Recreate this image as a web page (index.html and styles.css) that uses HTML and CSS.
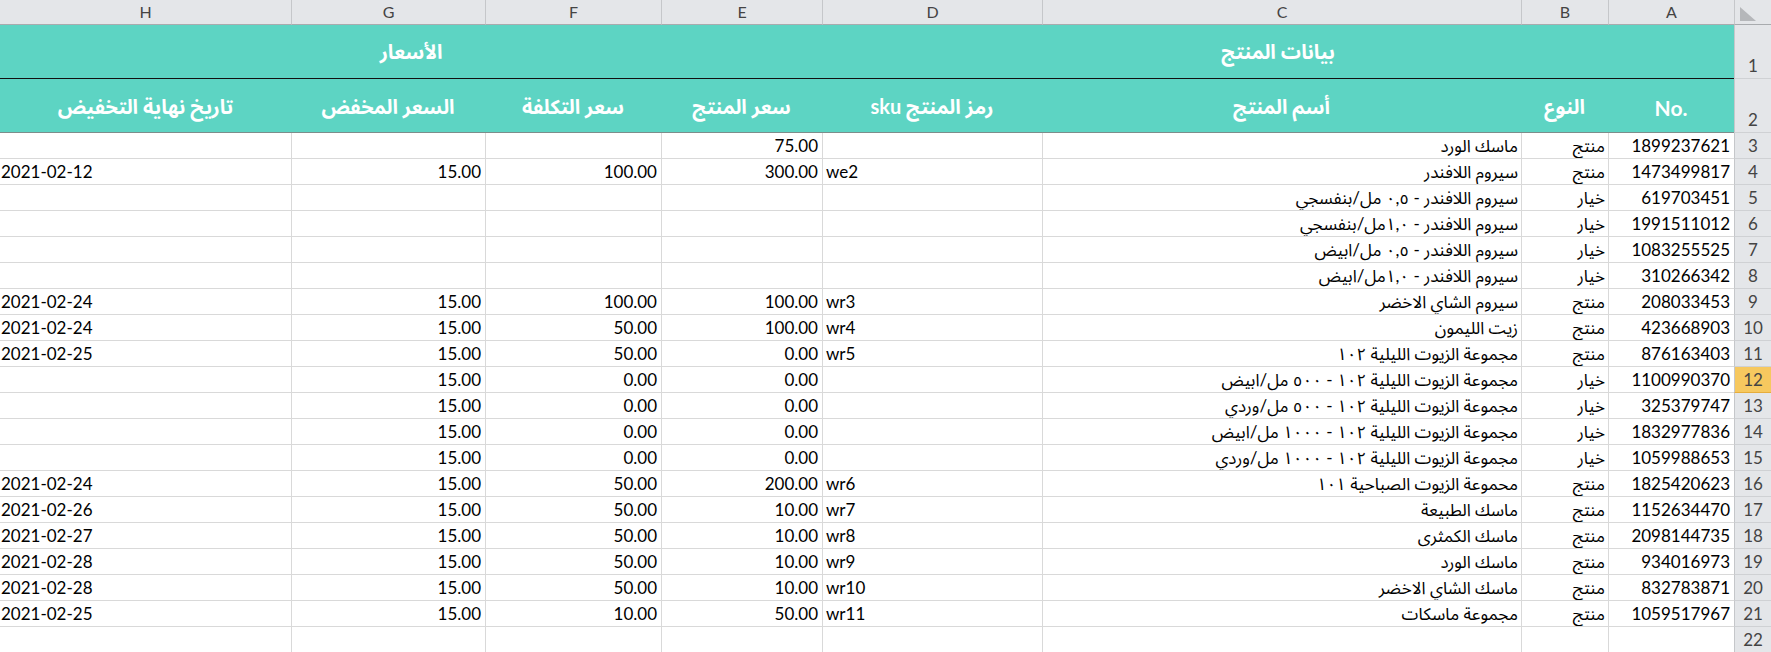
FILE: index.html
```html
<!DOCTYPE html>
<html lang="ar">
<head>
<meta charset="utf-8">
<title>Sheet</title>
<link rel="stylesheet" href="styles.css">
</head>
<body>
<div class="sheet">
  <div class="row colhead">
    <div class="ch corner"><svg class="tri" width="36" height="24" viewBox="0 0 36 24"><polygon points="5,7 5,21 21,21" fill="#b5b7ba"/></svg></div>
    <div class="ch">A</div><div class="ch">B</div><div class="ch">C</div><div class="ch">D</div>
    <div class="ch">E</div><div class="ch">F</div><div class="ch">G</div><div class="ch last">H</div>
  </div>
  <div class="row band1">
    <div class="rn tall">1</div>
    <div class="bandcell span4">بيانات المنتج</div>
    <div class="bandcell span4">الأسعار</div>
  </div>
  <div class="row band2">
    <div class="rn tall">2</div>
    <div class="hcell ltr">No.</div>
    <div class="hcell">النوع</div>
    <div class="hcell">أسم المنتج</div>
    <div class="hcell">رمز المنتج sku</div>
    <div class="hcell">سعر المنتج</div>
    <div class="hcell">سعر التكلفة</div>
    <div class="hcell">السعر المخفض</div>
    <div class="hcell">تاريخ نهاية التخفيض</div>
  </div>

  <div class="row"><div class="rn">3</div><div class="c n">1899237621</div><div class="c t">منتج</div><div class="c t">ماسك الورد</div><div class="c l"></div><div class="c n">75.00</div><div class="c n"></div><div class="c n"></div><div class="c l last"></div></div>
  <div class="row"><div class="rn">4</div><div class="c n">1473499817</div><div class="c t">منتج</div><div class="c t">سيروم اللافندر</div><div class="c l">we2</div><div class="c n">300.00</div><div class="c n">100.00</div><div class="c n">15.00</div><div class="c l last">2021-02-12</div></div>
  <div class="row"><div class="rn">5</div><div class="c n">619703451</div><div class="c t">خيار</div><div class="c t">سيروم اللافندر - ٠,٥ مل/بنفسجي</div><div class="c l"></div><div class="c n"></div><div class="c n"></div><div class="c n"></div><div class="c l last"></div></div>
  <div class="row"><div class="rn">6</div><div class="c n">1991511012</div><div class="c t">خيار</div><div class="c t">سيروم اللافندر - ١,٠مل/بنفسجي</div><div class="c l"></div><div class="c n"></div><div class="c n"></div><div class="c n"></div><div class="c l last"></div></div>
  <div class="row"><div class="rn">7</div><div class="c n">1083255525</div><div class="c t">خيار</div><div class="c t">سيروم اللافندر - ٠,٥ مل/ابيض</div><div class="c l"></div><div class="c n"></div><div class="c n"></div><div class="c n"></div><div class="c l last"></div></div>
  <div class="row"><div class="rn">8</div><div class="c n">310266342</div><div class="c t">خيار</div><div class="c t">سيروم اللافندر - ١,٠مل/ابيض</div><div class="c l"></div><div class="c n"></div><div class="c n"></div><div class="c n"></div><div class="c l last"></div></div>
  <div class="row"><div class="rn">9</div><div class="c n">208033453</div><div class="c t">منتج</div><div class="c t">سيروم الشاي الاخضر</div><div class="c l">wr3</div><div class="c n">100.00</div><div class="c n">100.00</div><div class="c n">15.00</div><div class="c l last">2021-02-24</div></div>
  <div class="row"><div class="rn">10</div><div class="c n">423668903</div><div class="c t">منتج</div><div class="c t">زيت الليمون</div><div class="c l">wr4</div><div class="c n">100.00</div><div class="c n">50.00</div><div class="c n">15.00</div><div class="c l last">2021-02-24</div></div>
  <div class="row"><div class="rn">11</div><div class="c n">876163403</div><div class="c t">منتج</div><div class="c t">مجموعة الزيوت الليلية ١٠٢</div><div class="c l">wr5</div><div class="c n">0.00</div><div class="c n">50.00</div><div class="c n">15.00</div><div class="c l last">2021-02-25</div></div>
  <div class="row"><div class="rn sel">12</div><div class="c n">1100990370</div><div class="c t">خيار</div><div class="c t">مجموعة الزيوت الليلية ١٠٢ - ٥٠٠ مل/ابيض</div><div class="c l"></div><div class="c n">0.00</div><div class="c n">0.00</div><div class="c n">15.00</div><div class="c l last"></div></div>
  <div class="row"><div class="rn">13</div><div class="c n">325379747</div><div class="c t">خيار</div><div class="c t">مجموعة الزيوت الليلية ١٠٢ - ٥٠٠ مل/وردي</div><div class="c l"></div><div class="c n">0.00</div><div class="c n">0.00</div><div class="c n">15.00</div><div class="c l last"></div></div>
  <div class="row"><div class="rn">14</div><div class="c n">1832977836</div><div class="c t">خيار</div><div class="c t">مجموعة الزيوت الليلية ١٠٢ - ١٠٠٠ مل/ابيض</div><div class="c l"></div><div class="c n">0.00</div><div class="c n">0.00</div><div class="c n">15.00</div><div class="c l last"></div></div>
  <div class="row"><div class="rn">15</div><div class="c n">1059988653</div><div class="c t">خيار</div><div class="c t">مجموعة الزيوت الليلية ١٠٢ - ١٠٠٠ مل/وردي</div><div class="c l"></div><div class="c n">0.00</div><div class="c n">0.00</div><div class="c n">15.00</div><div class="c l last"></div></div>
  <div class="row"><div class="rn">16</div><div class="c n">1825420623</div><div class="c t">منتج</div><div class="c t">محموعة الزيوت الصباحية ١٠١</div><div class="c l">wr6</div><div class="c n">200.00</div><div class="c n">50.00</div><div class="c n">15.00</div><div class="c l last">2021-02-24</div></div>
  <div class="row"><div class="rn">17</div><div class="c n">1152634470</div><div class="c t">منتج</div><div class="c t">ماسك الطبيعة</div><div class="c l">wr7</div><div class="c n">10.00</div><div class="c n">50.00</div><div class="c n">15.00</div><div class="c l last">2021-02-26</div></div>
  <div class="row"><div class="rn">18</div><div class="c n">2098144735</div><div class="c t">منتج</div><div class="c t">ماسك الكمثرى</div><div class="c l">wr8</div><div class="c n">10.00</div><div class="c n">50.00</div><div class="c n">15.00</div><div class="c l last">2021-02-27</div></div>
  <div class="row"><div class="rn">19</div><div class="c n">934016973</div><div class="c t">منتج</div><div class="c t">ماسك الورد</div><div class="c l">wr9</div><div class="c n">10.00</div><div class="c n">50.00</div><div class="c n">15.00</div><div class="c l last">2021-02-28</div></div>
  <div class="row"><div class="rn">20</div><div class="c n">832783871</div><div class="c t">منتج</div><div class="c t">ماسك الشاي الاخضر</div><div class="c l">wr10</div><div class="c n">10.00</div><div class="c n">50.00</div><div class="c n">15.00</div><div class="c l last">2021-02-28</div></div>
  <div class="row"><div class="rn">21</div><div class="c n">1059517967</div><div class="c t">منتج</div><div class="c t">مجموعة ماسكات</div><div class="c l">wr11</div><div class="c n">50.00</div><div class="c n">10.00</div><div class="c n">15.00</div><div class="c l last">2021-02-25</div></div>
  <div class="row"><div class="rn">22</div><div class="c n"></div><div class="c t"></div><div class="c t"></div><div class="c l"></div><div class="c n"></div><div class="c n"></div><div class="c n"></div><div class="c l last"></div></div>
</div>
</body>
</html>
```

FILE: styles.css
```css
html, body {
  margin: 0;
  padding: 0;
  background: #ffffff;
  overflow: hidden;
}

body {
  font-family: Lato, "Noto Sans Arabic", "Noto Naskh Arabic", "DejaVu Sans", sans-serif;
  font-size: 17px;
  color: #000;
}

.sheet {
  direction: rtl;
  width: 1771px;
}

.row {
  display: grid;
  grid-template-columns: 37px 126px 87px 479px 220px 161px 176px 194px 291px;
}

/* column letters */
.ch {
  height: 25px;
  box-sizing: border-box;
  background: #e4e6e9;
  border-bottom: 1px solid #a8abae;
  border-left: 1px solid #c5c7ca;
  color: #444;
  font-size: 16px;
  line-height: 24px;
  text-align: center;
}
.ch.last { border-left: none; }
.corner { border-left: 1px solid #c5c7ca; }
.tri { display: block; }

/* row numbers */
.rn {
  height: 26px;
  box-sizing: border-box;
  background: #e4e6e9;
  border-left: 1px solid #c5c7ca;
  border-bottom: 1px solid #cfd1d4;
  color: #444;
  text-align: center;
  line-height: 25px;
  direction: ltr;
}
.rn.tall {
  height: 54px;
  display: flex;
  align-items: flex-end;
  justify-content: center;
}
.rn.sel {
  background: #f6c85f;
  border-bottom-color: #e6ad3c;
}

/* teal header band */
.bandcell {
  grid-column: span 4;
  height: 54px;
  box-sizing: border-box;
  background: #5dd4c3;
  border-bottom: 1px solid #111;
  color: #fff;
  font-weight: 700;
  font-size: 20px;
  display: flex;
  align-items: center;
  justify-content: center;
  padding-top: 3px;
}

.hcell {
  height: 54px;
  box-sizing: border-box;
  background: #5dd4c3;
  border-bottom: 1px solid #7d8d8b;
  color: #fff;
  font-weight: 700;
  font-size: 20px;
  display: flex;
  align-items: center;
  justify-content: center;
  padding-top: 4px;
  white-space: nowrap;
}
.hcell.ltr {
  direction: ltr;
  font-size: 21px;
}

/* data cells */
.c {
  height: 26px;
  box-sizing: border-box;
  border-left: 1px solid #d9d9d9;
  border-bottom: 1px solid #d9d9d9;
  line-height: 25px;
  padding: 0 4px;
  white-space: nowrap;
  overflow: hidden;
}
.c.last { border-left: none; }
.n {
  direction: ltr;
  text-align: right;
}
.t {
  text-align: right;
  padding-right: 3px;
}
.l {
  direction: ltr;
  text-align: left;
  padding-left: 3px;
}
.l.last { padding-left: 1px; }
```
